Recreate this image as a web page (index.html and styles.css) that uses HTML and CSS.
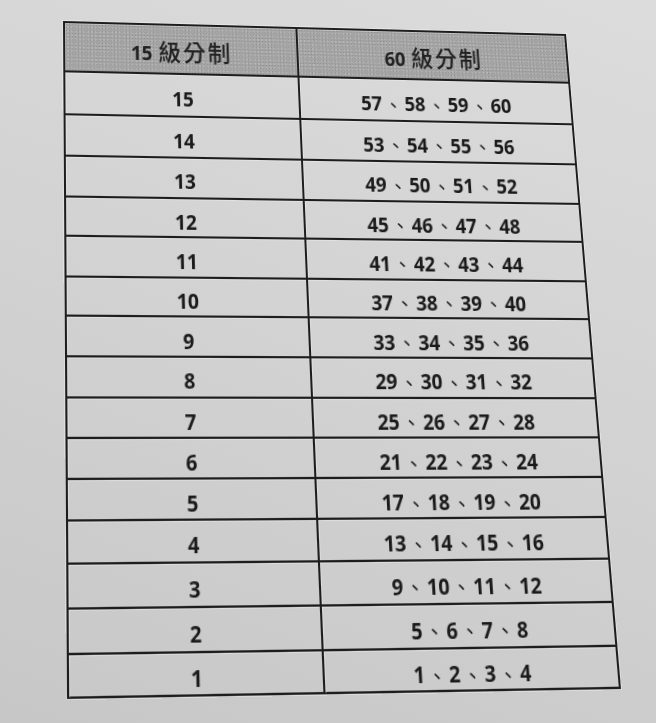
FILE: index.html
```html
<!DOCTYPE html>
<html lang="zh-Hant-TW">
<head>
<meta charset="utf-8">
<title>級分對照表</title>
<link rel="stylesheet" href="styles.css">
</head>
<body>
<div class="sheet">
  <div class="cell head"><span>15 <span class="cjk">級分制</span></span></div>
  <div class="cell head"><span>60 <span class="cjk">級分制</span></span></div>

  <div class="cell">15</div>
  <div class="cell">57<span class="sep">、</span>58<span class="sep">、</span>59<span class="sep">、</span>60</div>
  <div class="cell">14</div>
  <div class="cell">53<span class="sep">、</span>54<span class="sep">、</span>55<span class="sep">、</span>56</div>
  <div class="cell">13</div>
  <div class="cell">49<span class="sep">、</span>50<span class="sep">、</span>51<span class="sep">、</span>52</div>
  <div class="cell">12</div>
  <div class="cell">45<span class="sep">、</span>46<span class="sep">、</span>47<span class="sep">、</span>48</div>
  <div class="cell">11</div>
  <div class="cell">41<span class="sep">、</span>42<span class="sep">、</span>43<span class="sep">、</span>44</div>
  <div class="cell">10</div>
  <div class="cell">37<span class="sep">、</span>38<span class="sep">、</span>39<span class="sep">、</span>40</div>
  <div class="cell">9</div>
  <div class="cell">33<span class="sep">、</span>34<span class="sep">、</span>35<span class="sep">、</span>36</div>
  <div class="cell">8</div>
  <div class="cell">29<span class="sep">、</span>30<span class="sep">、</span>31<span class="sep">、</span>32</div>
  <div class="cell">7</div>
  <div class="cell">25<span class="sep">、</span>26<span class="sep">、</span>27<span class="sep">、</span>28</div>
  <div class="cell">6</div>
  <div class="cell">21<span class="sep">、</span>22<span class="sep">、</span>23<span class="sep">、</span>24</div>
  <div class="cell">5</div>
  <div class="cell">17<span class="sep">、</span>18<span class="sep">、</span>19<span class="sep">、</span>20</div>
  <div class="cell">4</div>
  <div class="cell">13<span class="sep">、</span>14<span class="sep">、</span>15<span class="sep">、</span>16</div>
  <div class="cell">3</div>
  <div class="cell">9<span class="sep">、</span>10<span class="sep">、</span>11<span class="sep">、</span>12</div>
  <div class="cell">2</div>
  <div class="cell">5<span class="sep">、</span>6<span class="sep">、</span>7<span class="sep">、</span>8</div>
  <div class="cell">1</div>
  <div class="cell">1<span class="sep">、</span>2<span class="sep">、</span>3<span class="sep">、</span>4</div>
</div>
</body>
</html>
```

FILE: styles.css
```css
html,
body {
  margin: 0;
  height: 100%;
}

body {
  overflow: hidden;
  background: linear-gradient(200deg, #dcdcdc 0%, #d2d2d2 50%, #c7c7c7 100%);
  font-family: "Open Sans", "Noto Sans CJK TC", sans-serif;
  color: #1a1a1a;
}

/* the printed table, photographed at a slight angle */
.sheet {
  width: 520px;
  height: 614px;
  box-sizing: border-box;
  display: grid;
  grid-template-columns: 236px 1fr;
  grid-template-rows:
    49.4px 41.4px 40.4px 38.6px 37.6px 37.2px 36.8px 36.6px
    36.6px 36.4px 36.2px 36px 36.6px 38px 38.2px 1fr;
  border: 2px solid #1d1d1d;
  box-shadow: 0 0 0 1px rgba(255, 255, 255, 0.3);
  transform-origin: 0 0;
  transform: matrix3d(1.003942, 0.027201, 0, 0.00006473,
                      -0.0038953, 0.995629, 0, -0.00015537,
                      0, 0, 1, 0,
                      63, 21, 0, 1);
}

.cell {
  display: flex;
  align-items: center;
  justify-content: center;
  padding-top: 8px;
  box-sizing: border-box;
  border-right: 2px solid #1d1d1d;
  border-bottom: 2px solid #1d1d1d;
  box-shadow: inset 1px 1px 0 rgba(255, 255, 255, 0.3);
  font-size: 19px;
  font-weight: 700;
  white-space: nowrap;
}

.cell:nth-child(even) {
  border-right: none;
}

.cell:nth-last-child(-n + 2) {
  border-bottom: none;
}

.head {
  padding-top: 2px;
  background-color: #a4a4a4;
  background-image:
    radial-gradient(rgba(115, 115, 115, 0.5) 0.7px, transparent 1px),
    radial-gradient(rgba(200, 200, 200, 0.45) 0.7px, transparent 1px);
  background-size: 3px 3px, 4px 4px;
  background-position: 0 0, 1px 2px;
  color: #222;
}

.cjk {
  margin-left: 1px;
  font-family: "Noto Sans CJK TC", sans-serif;
  font-size: 23px;
  font-weight: 500;
  letter-spacing: 2px;
}

.sep {
  margin: 0 2px;
  font-family: "Noto Sans CJK TC", sans-serif;
  font-weight: 400;
}
```
